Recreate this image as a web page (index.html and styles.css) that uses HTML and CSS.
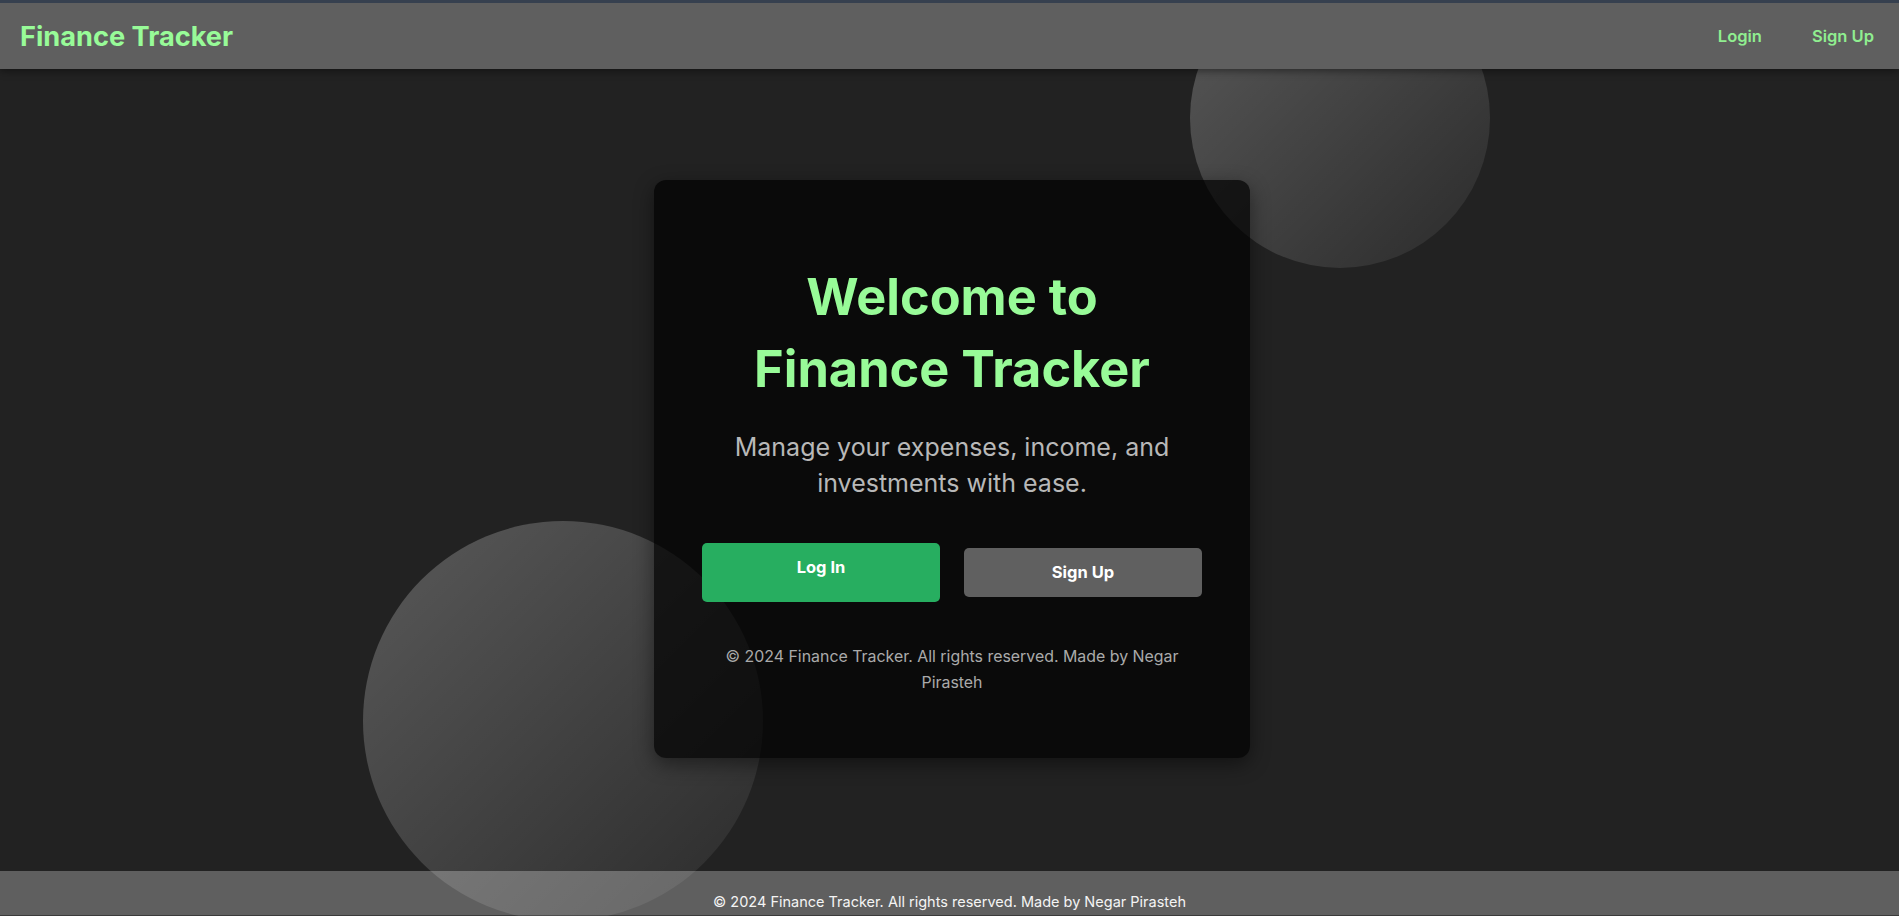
FILE: index.html
```html
<!DOCTYPE html>
<html lang="en">
<head>
<meta charset="utf-8">
<title>Finance Tracker</title>
<link rel="stylesheet" href="styles.css">
</head>
<body>
<div class="page">
  <div class="topstrip"></div>
  <header class="navbar">
    <a class="logo" href="#">Finance Tracker</a>
    <nav class="nav-links">
      <a href="#">Login</a>
      <a href="#">Sign Up</a>
    </nav>
  </header>
  <main class="hero">
    <div class="circle circle-top"></div>
    <div class="circle circle-bottom"></div>
    <section class="card">
      <h1 class="title">Welcome to<br>Finance Tracker</h1>
      <p class="subtitle">Manage your expenses, income, and investments with ease.</p>
      <div class="actions">
        <a class="btn btn-login" href="#">Log In</a>
        <a class="btn btn-signup" href="#">Sign Up</a>
      </div>
      <p class="card-note">© 2024 Finance Tracker. All rights reserved. Made by Negar Pirasteh</p>
    </section>
  </main>
  <footer class="footer">© 2024 Finance Tracker. All rights reserved. Made by Negar Pirasteh</footer>
</div>
</body>
</html>
```
FILE: styles.css
```css
* { box-sizing: border-box; }
html, body { margin: 0; padding: 0; height: 100%; }
body {
  background: #222222;
  font-family: Inter, "Open Sans", "Noto Sans", sans-serif;
  color: #ffffff;
  overflow: hidden;
}
.page {
  display: flex;
  flex-direction: column;
  height: 100vh;
}
.topstrip {
  position: relative;
  z-index: 11;
  height: 3px;
  background: #36404f;
  flex: none;
}
.navbar {
  position: relative;
  z-index: 10;
  flex: none;
  height: 66px;
  background: #5f5f5f;
  display: flex;
  align-items: center;
  justify-content: space-between;
  padding: 0 25px 0 20px;
  box-shadow: 0 2px 8px rgba(0,0,0,0.45);
}
.logo {
  color: #98fb98;
  font-weight: 700;
  font-size: 27.2px;
  text-decoration: none;
}
.nav-links {
  display: flex;
  gap: 50px;
}
.nav-links a {
  color: #90ee90;
  font-weight: 600;
  font-size: 16.5px;
  text-decoration: none;
}
.hero {
  position: relative;
  flex: 1;
  display: flex;
  align-items: center;
  justify-content: center;
  padding: 0 0 2px 5px;
}
.circle {
  position: absolute;
  border-radius: 50%;
  background: linear-gradient(135deg, rgba(255,255,255,0.25), rgba(255,255,255,0.04));
  z-index: 2;
}
.circle-top {
  width: 300px;
  height: 300px;
  left: 1190px;
  top: -101px;
}
.circle-bottom {
  width: 400px;
  height: 400px;
  left: 363px;
  top: 452px;
}
.card {
  position: relative;
  z-index: 3;
  width: 596px;
  height: 578px;
  padding: 48px;
  background: rgba(0,0,0,0.7);
  border-radius: 12px;
  box-shadow: 0 6px 20px rgba(0,0,0,0.45);
  text-align: center;
}
.title {
  margin: 33px 0 0;
  color: #98fb98;
  font-size: 50.5px;
  line-height: 72px;
  font-weight: 700;
}
.subtitle {
  margin: 24px 0 0;
  color: #b8b8b8;
  font-size: 25px;
  line-height: 36px;
}
.actions {
  display: flex;
  align-items: center;
  gap: 24px;
  margin-top: 42px;
}
.btn {
  flex: 1;
  display: block;
  color: #ffffff;
  font-weight: 700;
  font-size: 16.5px;
  line-height: 24px;
  text-decoration: none;
  border-radius: 5px;
}
.btn-login {
  background: #27ae60;
  padding: 12px 0 23px;
}
.btn-signup {
  background: #606060;
  padding: 12px 0 13px;
}
.card-note {
  margin: 42px 0 0;
  color: #aaaaaa;
  font-size: 15.9px;
  line-height: 26px;
}
.footer {
  position: relative;
  z-index: 1;
  flex: none;
  height: 45px;
  padding-top: 20px;
  background: #5f5f5f;
  border-bottom: 1px solid #3a3a3a;
  text-align: center;
  font-size: 14.5px;
  line-height: 21px;
  color: #f4f4f4;
}
```
